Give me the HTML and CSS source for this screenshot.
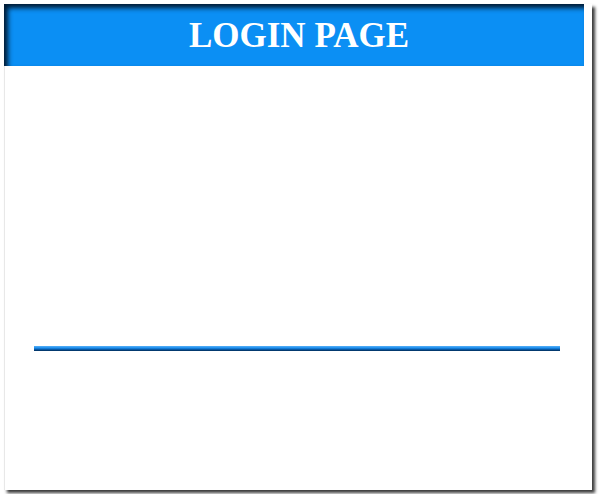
FILE: index.html
```html
<!DOCTYPE html>
<html>
<head>
<meta charset="utf-8">
<link rel="stylesheet" href="styles.css">
</head>
<body>
<div class="frame">
  <div class="header">
    <h1 class="title">LOGIN PAGE</h1>
  </div>
  <div class="content">
    <div class="rule"></div>
  </div>
</div>
</body>
</html>
```
FILE: styles.css
```css
html, body {
  margin: 0;
  padding: 0;
  background: #ffffff;
}
body {
  padding: 4px;
}
.frame {
  width: 587px;
  height: 486px;
  background: #ffffff;
  border-left: 1px solid #e8e8e8;
  box-shadow: 3px 3px 3px #3a3a3a;
  display: flex;
  flex-direction: column;
}
.header {
  width: 580px;
  height: 62px;
  margin-left: -1px;
  background: #0b8ff4;
  box-shadow: inset 4px 4px 5px #001a33;
  display: flex;
  align-items: center;
  justify-content: center;
}
.title {
  margin: 0;
  padding: 2px 0 0 10px;
  color: #ffffff;
  font-family: "Liberation Serif", "Times New Roman", serif;
  font-weight: bold;
  font-size: 35px;
}
.content {
  flex: 1;
  padding: 280px 32px 0 29px;
}
.rule {
  height: 5px;
  background: linear-gradient(to bottom, #5ab0f5 0%, #1a8ef0 40%, #0a5fb0 65%, #002a55 100%);
}
```
